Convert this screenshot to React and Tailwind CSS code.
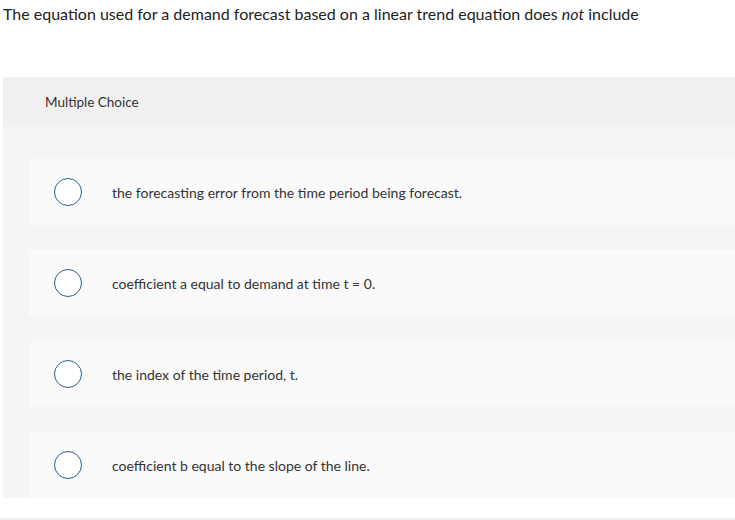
import React from "react";

const options = [
  "the forecasting error from the time period being forecast.",
  "coefficient a equal to demand at time t = 0.",
  "the index of the time period, t.",
  "coefficient b equal to the slope of the line.",
];

export default function App() {
  return (
    <div className="w-[735px] h-[520px] bg-white overflow-hidden font-['Lato','Open_Sans',sans-serif] text-[#333]">
      {/* Question */}
      <p className="pl-[3px] pt-[4px] text-[16px] leading-[20px] text-[#222]">
        The equation used for a demand forecast based on a linear trend equation does <em>not</em> include
      </p>

      {/* Answer panel */}
      <div className="ml-[3px] mt-[53px] bg-[#f5f5f5]">
        <div className="h-[50px] bg-[#f0f0f0] pl-[42px] flex items-center text-[13.5px] text-[#333]">
          Multiple Choice
        </div>
        <div className="pl-[26px] pt-[32px] flex flex-col gap-[25px]">
          {options.map((o) => (
            <div key={o} className="h-[66px] bg-[#fafafa] rounded-l-[3px] flex items-center">
              <span className="ml-[25px] w-[28px] h-[28px] rounded-full border-[1.5px] border-[#2f5f8e] bg-white shrink-0" />
              <span className="ml-[30px] pt-[1px] text-[14px] text-[#333]">{o}</span>
            </div>
          ))}
        </div>
      </div>

      <div className="mt-[20px] h-[2px] bg-[#efefef]" />
    </div>
  );
}
